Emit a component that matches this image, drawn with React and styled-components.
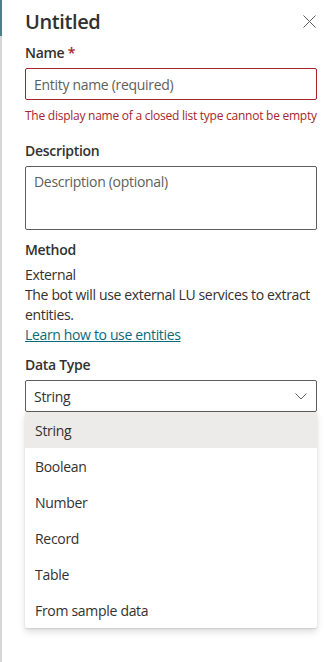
import React from 'react';
import styled, { createGlobalStyle } from 'styled-components';

const Global = createGlobalStyle`
  html, body {
    margin: 0;
    padding: 0;
    background: #fff;
  }
  body {
    font-family: "Segoe UI", "Open Sans", sans-serif;
    color: #323130;
  }
`;

const Panel = styled.div`
  position: relative;
  width: 325px;
  height: 662px;
  box-sizing: border-box;
  border-left: 2px solid #d6d6d6;
  padding: 0 8px 0 23px;
  &:before {
    content: '';
    position: absolute;
    left: -2px;
    top: 0;
    width: 2px;
    height: 36px;
    background: #4d7f89;
  }
`;

const Header = styled.div`
  display: flex;
  align-items: center;
  justify-content: space-between;
  height: 38px;
  padding-top: 4px;
  box-sizing: border-box;
`;

const Title = styled.h1`
  margin: 0;
  font-size: 20px;
  font-weight: 600;
  letter-spacing: -0.4px;
  color: #323130;
`;

const CloseBtn = styled.button`
  border: 0;
  background: none;
  padding: 0;
  width: 16px;
  height: 16px;
  display: flex;
  align-items: center;
  justify-content: center;
`;

const Field = styled.div`
  display: flex;
  flex-direction: column;
  margin-top: ${p => p.$gap || 0}px;
`;

const Label = styled.label`
  font-size: 14px;
  font-weight: 600;
  line-height: 20px;
  letter-spacing: -0.3px;
  padding: 5px 0;
  color: #323130;
  span { color: #a4262c; }
`;

const Input = styled.input`
  box-sizing: border-box;
  height: 32px;
  width: 100%;
  border: 1px solid ${p => (p.$error ? '#a4262c' : '#605e5c')};
  border-radius: 2px;
  padding: 0 8px;
  font-family: inherit;
  font-size: 14px;
  letter-spacing: -0.3px;
  color: #323130;
  &::placeholder { color: #605e5c; }
`;

const TextArea = styled.textarea`
  box-sizing: border-box;
  height: 64px;
  width: 100%;
  border: 1px solid #605e5c;
  border-radius: 2px;
  padding: 5px 8px;
  font-family: inherit;
  font-size: 14px;
  letter-spacing: -0.3px;
  resize: none;
  &::placeholder { color: #605e5c; }
`;

const ErrorText = styled.div`
  font-size: 12px;
  line-height: 16px;
  letter-spacing: -0.25px;
  color: #a4262c;
  padding-top: 8px;
  white-space: nowrap;
`;

const Text = styled.div`
  font-size: 14px;
  line-height: 20px;
  letter-spacing: -0.35px;
  color: #323130;
`;

const Link = styled.a`
  font-size: 14px;
  line-height: 20px;
  letter-spacing: -0.35px;
  color: #0b6a7a;
  text-decoration: underline;
`;

const SelectWrap = styled.div`
  position: relative;
`;

const Select = styled.div`
  box-sizing: border-box;
  height: 32px;
  border: 1px solid #605e5c;
  border-radius: 2px;
  padding: 0 8px;
  display: flex;
  align-items: center;
  justify-content: space-between;
  font-size: 14px;
  letter-spacing: -0.3px;
`;

const Menu = styled.ul`
  position: absolute;
  left: 0;
  right: 0;
  top: 32px;
  margin: 0;
  padding: 0;
  list-style: none;
  background: #fff;
  border-radius: 2px;
  box-shadow: 0 3.2px 7.2px rgba(0,0,0,0.13), 0 0.6px 1.8px rgba(0,0,0,0.11);
`;

const Option = styled.li`
  height: 36px;
  display: flex;
  align-items: center;
  padding: 0 10px;
  font-size: 14px;
  letter-spacing: -0.3px;
  color: #323130;
  background: ${p => (p.$selected ? '#edebe9' : 'transparent')};
`;

const Chevron = () => (
  <svg width="14" height="14" viewBox="0 0 14 14" fill="none">
    <path d="M1.5 4.5 L7 10 L12.5 4.5" stroke="#605e5c" strokeWidth="1" />
  </svg>
);

const types = ['String', 'Boolean', 'Number', 'Record', 'Table', 'From sample data'];

export default function App() {
  return (
    <>
      <Global />
      <Panel>
        <Header>
          <Title>Untitled</Title>
          <CloseBtn aria-label="Close">
            <svg width="13" height="13" viewBox="0 0 13 13">
              <path d="M0.5 0.5 L12.5 12.5 M12.5 0.5 L0.5 12.5" stroke="#605e5c" strokeWidth="1" />
            </svg>
          </CloseBtn>
        </Header>

        <Field>
          <Label>Name <span>*</span></Label>
          <Input $error placeholder="Entity name (required)" />
          <ErrorText>The display name of a closed list type cannot be empty</ErrorText>
        </Field>

        <Field $gap={12}>
          <Label>Description</Label>
          <TextArea placeholder="Description (optional)" />
        </Field>

        <Field $gap={5}>
          <Label>Method</Label>
          <Text>External</Text>
          <Text>The bot will use external LU services to extract entities.</Text>
          <Link href="#">Learn how to use entities</Link>
        </Field>

        <Field $gap={5}>
          <Label>Data Type</Label>
          <SelectWrap>
            <Select>
              String
              <Chevron />
            </Select>
            <Menu>
              {types.map((t, i) => (
                <Option key={t} $selected={i === 0}>{t}</Option>
              ))}
            </Menu>
          </SelectWrap>
        </Field>
      </Panel>
    </>
  );
}
